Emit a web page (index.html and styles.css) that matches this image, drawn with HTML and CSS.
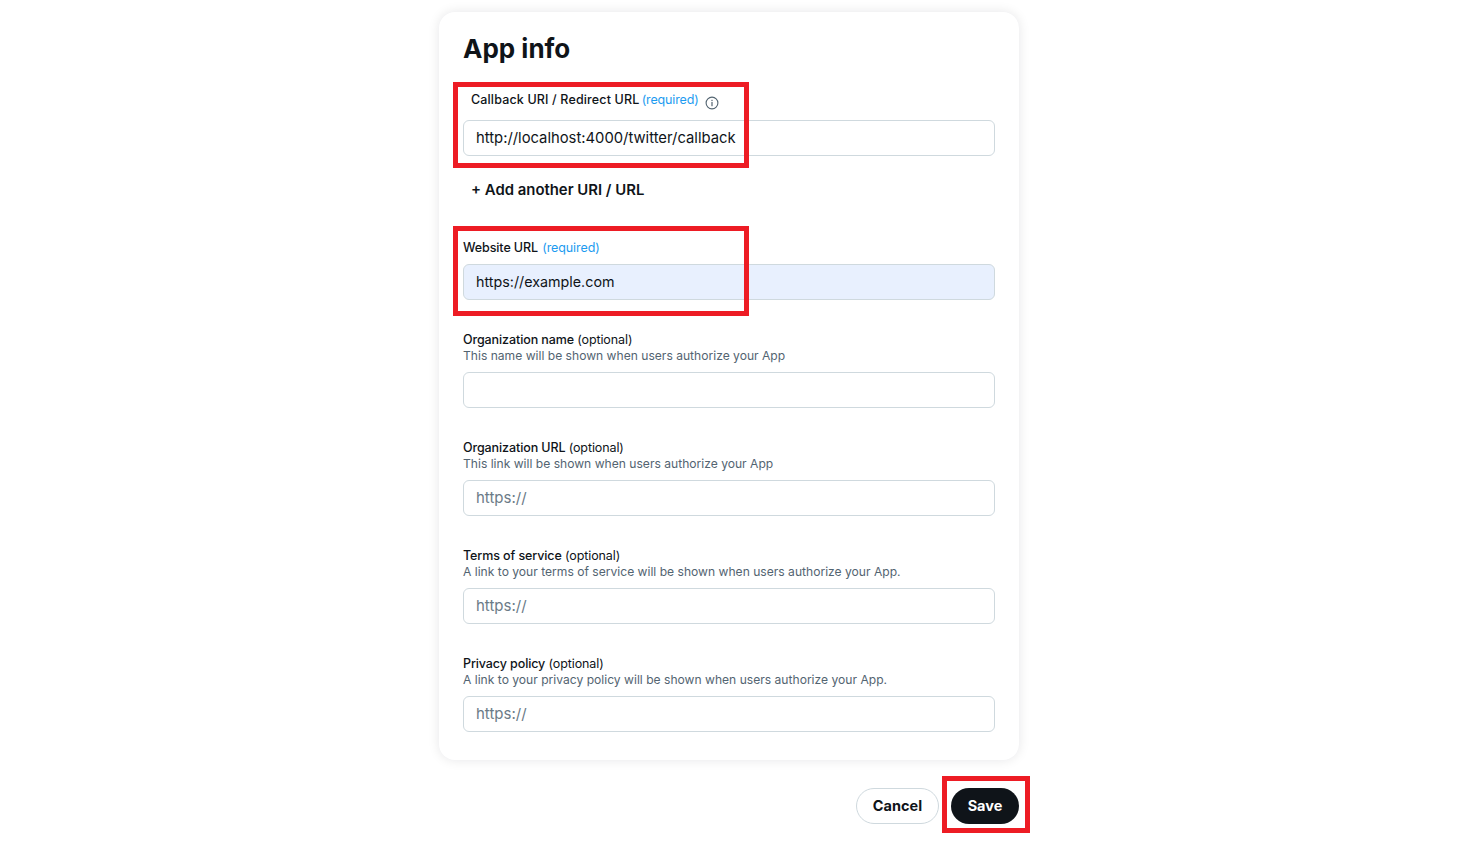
FILE: index.html
```html
<!DOCTYPE html>
<html>
<head>
  <title>App info</title>
  <link rel="stylesheet" href="styles.css">
</head>
<body>
<div class="page">
  <div class="card">
    <h2>App info</h2>

    <div class="field field-callback">
      <div class="label label-inset"><span class="wide">Callback URI / Redirect URL</span> <span class="req">(required)</span>
        <svg class="info" width="14" height="14" viewBox="0 0 14 14"><circle cx="7" cy="7" r="5.9" fill="none" stroke="#536471" stroke-width="1.1"/><rect x="6.4" y="6" width="1.2" height="4.2" fill="#536471"/><rect x="6.4" y="3.8" width="1.2" height="1.3" fill="#536471"/></svg>
      </div>
      <input class="text" value="http://localhost:4000/twitter/callback">
    </div>
    <div class="add">+ Add another URI / URL</div>

    <div class="field field-website">
      <div class="label">Website URL <span class="req">(required)</span></div>
      <input class="text filled" value="https://example.com">
    </div>

    <div class="field">
      <div class="label">Organization name <span class="opt">(optional)</span></div>
      <div class="hint">This name will be shown when users authorize your App</div>
      <input class="text">
    </div>

    <div class="field">
      <div class="label">Organization URL <span class="opt">(optional)</span></div>
      <div class="hint">This link will be shown when users authorize your App</div>
      <input class="text" placeholder="https://">
    </div>

    <div class="field">
      <div class="label">Terms of service <span class="opt">(optional)</span></div>
      <div class="hint">A link to your terms of service will be shown when users authorize your App.</div>
      <input class="text" placeholder="https://">
    </div>

    <div class="field">
      <div class="label">Privacy policy <span class="opt">(optional)</span></div>
      <div class="hint">A link to your privacy policy will be shown when users authorize your App.</div>
      <input class="text" placeholder="https://">
    </div>
  </div>

  <div class="actions">
    <button class="btn cancel">Cancel</button>
    <button class="btn save">Save</button>
  </div>
</div>

<div class="mark mark-callback"></div>
<div class="mark mark-website"></div>
<div class="mark mark-save"></div>
</body>
</html>
```

FILE: styles.css
```css
html, body {
  margin: 0;
  background-color: #fff;
  overflow: hidden;
}
body {
  position: relative;
  height: 845px;
  font-family: "Inter", "Liberation Sans", sans-serif;
  color: #0f1419;
}
.page {
  width: 580px;
  margin-left: 439px;
  padding-top: 12px;
}
.card {
  box-sizing: border-box;
  height: 748px;
  padding: 21px 24px 0;
  border-radius: 16px;
  background-color: #fff;
  box-shadow: 0 0 12px rgba(15, 20, 25, 0.1);
}
h2 {
  margin: 0;
  font-size: 26px;
  line-height: 32px;
  font-weight: 700;
}
.field {
  margin-top: 32px;
}
.field-callback {
  margin-top: 27px;
}
.field-website {
  margin-top: 40px;
}
.label, .hint {
  line-height: 16px;
}
.label {
  height: 16px;
  font-size: 12.5px;
  font-weight: 500;
  letter-spacing: -0.1px;
}
.label-inset {
  padding-left: 8px;
}
.label-inset .req {
  margin-left: -1px;
  letter-spacing: -0.15px;
}
.wide {
  letter-spacing: 0.15px;
}
.req {
  margin-left: 1px;
  font-weight: 400;
  color: #1d9bf0;
}
.opt {
  font-weight: 400;
}
.hint {
  font-size: 12.1px;
  color: #536471;
}
.info {
  margin-left: 3px;
  vertical-align: -6px;
}
.text {
  display: block;
  box-sizing: border-box;
  width: 100%;
  height: 36px;
  margin-top: 8px;
  padding: 0 12px 1px;
  border: 1px solid #cfd9de;
  border-radius: 6px;
  outline: none;
  background-color: #fff;
  font-family: inherit;
  font-size: 15px;
  color: #0f1419;
}
.field-callback .text {
  margin-top: 12px;
  padding-bottom: 0;
  font-size: 14.8px;
}
.text::placeholder {
  color: #6b7b87;
  opacity: 1;
}
.filled {
  background-color: #e8f0fe;
  font-size: 14.3px;
}
.add {
  margin-top: 24px;
  padding-left: 8px;
  font-size: 14.9px;
  line-height: 20px;
  font-weight: 600;
}
.actions {
  display: flex;
  justify-content: flex-end;
  gap: 12px;
  margin-top: 28px;
}
.btn {
  box-sizing: border-box;
  height: 36px;
  padding: 0 0 2px;
  border-radius: 18px;
  font-family: inherit;
  font-size: 14.5px;
  font-weight: 700;
}
.cancel {
  width: 83px;
  border: 1px solid #cfd9de;
  background-color: #fff;
  color: #0f1419;
}
.save {
  width: 68px;
  border: none;
  background-color: #0f1419;
  color: #fff;
}
.mark {
  position: absolute;
  box-sizing: border-box;
  border: 5px solid #ed1c24;
}
.mark-callback {
  left: 453px;
  top: 82px;
  width: 296px;
  height: 86px;
}
.mark-website {
  left: 453px;
  top: 226px;
  width: 296px;
  height: 90px;
}
.mark-save {
  left: 942px;
  top: 776px;
  width: 88px;
  height: 57px;
}
```
